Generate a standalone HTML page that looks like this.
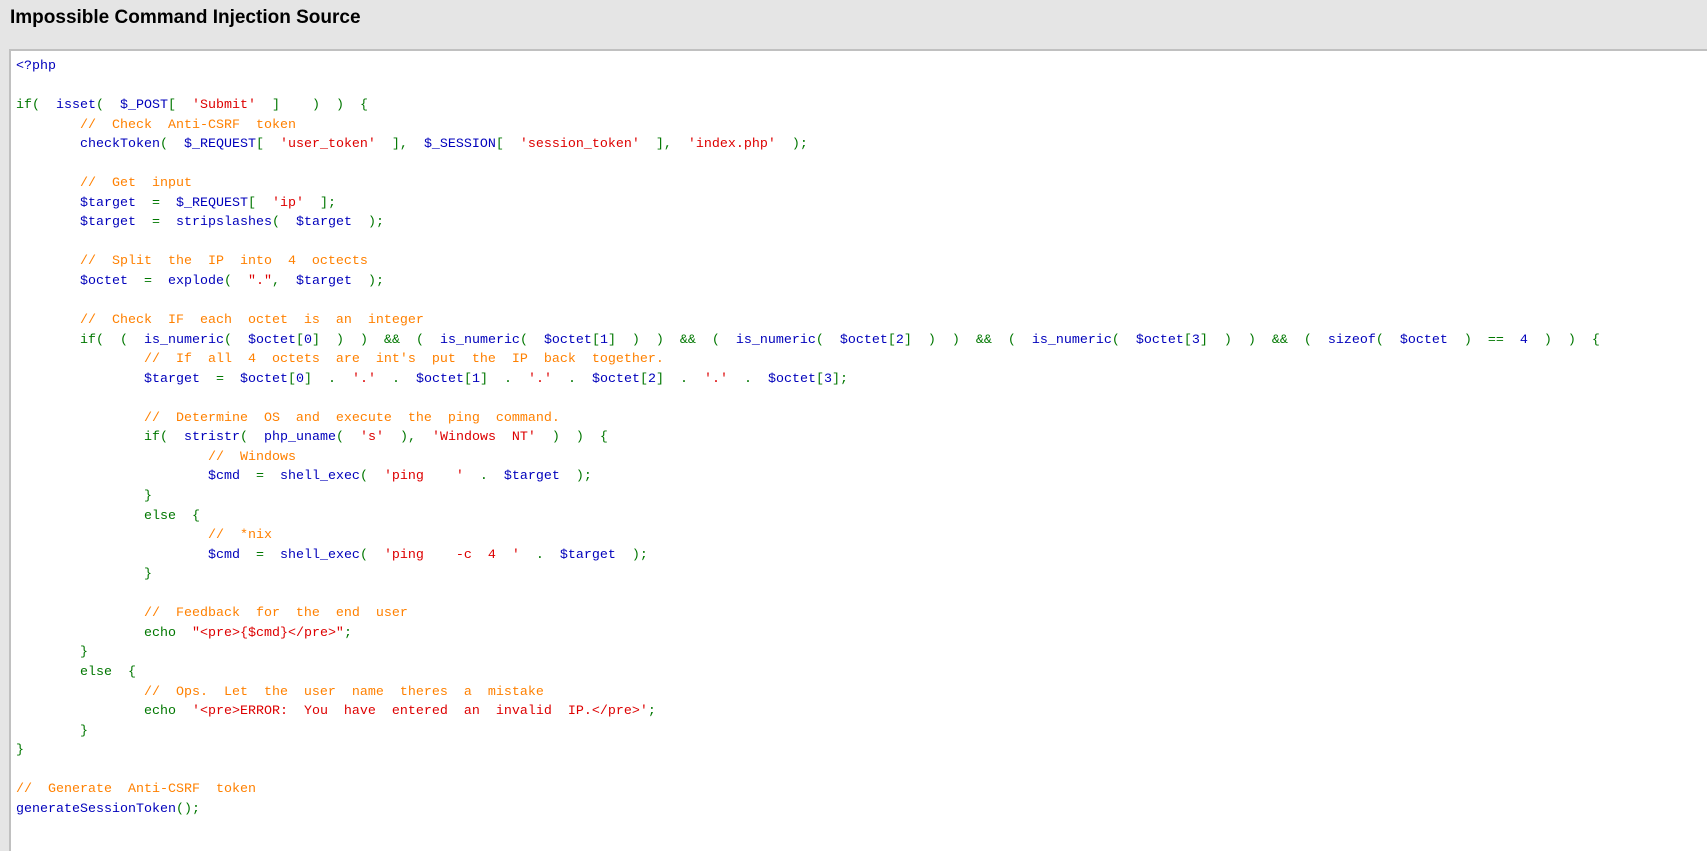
<!DOCTYPE html>
<html><head><meta charset="utf-8"><style>
html,body{margin:0;padding:0;background:#e5e5e5;width:1707px;height:829px;overflow:hidden}
h1{position:absolute;left:10px;top:7px;margin:0;font:bold 19px "Liberation Sans",Arial,sans-serif;color:#000}
.box{position:absolute;left:9px;top:49px;right:0;height:800px;background:#fff;border-top:2px solid #c0c0c0;border-left:2px solid #c0c0c0}
pre{margin:0;position:absolute;left:5px;top:6px;font:13.33px/19.55px "Liberation Mono",monospace;color:#0000BB;white-space:pre}
.g{color:#007700}.b{color:#0000BB}.r{color:#DD0000}.o{color:#FF8000}
</style></head><body>
<h1>Impossible Command Injection Source</h1>
<div class="box"><pre><span class="b">&lt;?php</span>

<span class="g">if(  </span>isset<span class="g">(  </span>$_POST<span class="g">[  </span><span class="r">'Submit'</span><span class="g">  ]    )  )  {</span>
<span class="o">        //  Check  Anti-CSRF  token</span>
        checkToken<span class="g">(  </span>$_REQUEST<span class="g">[  </span><span class="r">'user_token'</span><span class="g">  ],  </span>$_SESSION<span class="g">[  </span><span class="r">'session_token'</span><span class="g">  ],  </span><span class="r">'index.php'</span><span class="g">  );</span>

<span class="o">        //  Get  input</span>
        $target  <span class="g">=  </span>$_REQUEST<span class="g">[  </span><span class="r">'ip'</span><span class="g">  ];</span>
        $target  <span class="g">=  </span>stripslashes<span class="g">(  </span>$target  <span class="g">);</span>

<span class="o">        //  Split  the  IP  into  4  octects</span>
        $octet  <span class="g">=  </span>explode<span class="g">(  </span><span class="r">"."</span><span class="g">,  </span>$target  <span class="g">);</span>

<span class="o">        //  Check  IF  each  octet  is  an  integer</span>
<span class="g">        if(  (  </span>is_numeric<span class="g">(  </span>$octet<span class="g">[</span>0<span class="g">]  )  )  &amp;&amp;  (  </span>is_numeric<span class="g">(  </span>$octet<span class="g">[</span>1<span class="g">]  )  )  &amp;&amp;  (  </span>is_numeric<span class="g">(  </span>$octet<span class="g">[</span>2<span class="g">]  )  )  &amp;&amp;  (  </span>is_numeric<span class="g">(  </span>$octet<span class="g">[</span>3<span class="g">]  )  )  &amp;&amp;  (  </span>sizeof<span class="g">(  </span>$octet  <span class="g">)  ==  </span>4  <span class="g">)  )  {</span>
<span class="o">                //  If  all  4  octets  are  int's  put  the  IP  back  together.</span>
                $target  <span class="g">=  </span>$octet<span class="g">[</span>0<span class="g">]  .  </span><span class="r">'.'</span><span class="g">  .  </span>$octet<span class="g">[</span>1<span class="g">]  .  </span><span class="r">'.'</span><span class="g">  .  </span>$octet<span class="g">[</span>2<span class="g">]  .  </span><span class="r">'.'</span><span class="g">  .  </span>$octet<span class="g">[</span>3<span class="g">];</span>

<span class="o">                //  Determine  OS  and  execute  the  ping  command.</span>
<span class="g">                if(  </span>stristr<span class="g">(  </span>php_uname<span class="g">(  </span><span class="r">'s'</span><span class="g">  ),  </span><span class="r">'Windows  NT'</span><span class="g">  )  )  {</span>
<span class="o">                        //  Windows</span>
                        $cmd  <span class="g">=  </span>shell_exec<span class="g">(  </span><span class="r">'ping    '</span><span class="g">  .  </span>$target  <span class="g">);</span>
<span class="g">                }</span>
<span class="g">                else  {</span>
<span class="o">                        //  *nix</span>
                        $cmd  <span class="g">=  </span>shell_exec<span class="g">(  </span><span class="r">'ping    -c  4  '</span><span class="g">  .  </span>$target  <span class="g">);</span>
<span class="g">                }</span>

<span class="o">                //  Feedback  for  the  end  user</span>
<span class="g">                echo  </span><span class="r">"&lt;pre&gt;{$cmd}&lt;/pre&gt;"</span><span class="g">;</span>
<span class="g">        }</span>
<span class="g">        else  {</span>
<span class="o">                //  Ops.  Let  the  user  name  theres  a  mistake</span>
<span class="g">                echo  </span><span class="r">'&lt;pre&gt;ERROR:  You  have  entered  an  invalid  IP.&lt;/pre&gt;'</span><span class="g">;</span>
<span class="g">        }</span>
<span class="g">}</span>

<span class="o">//  Generate  Anti-CSRF  token</span>
generateSessionToken<span class="g">();</span>
</pre></div>
</body></html>
